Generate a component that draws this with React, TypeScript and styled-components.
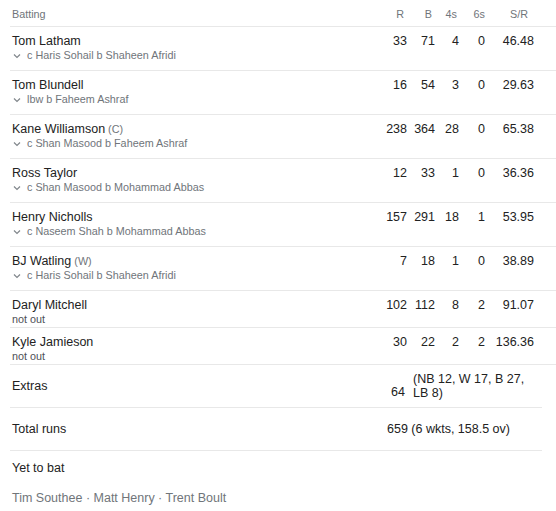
import React from "react";
import styled, {createGlobalStyle} from "styled-components";

const GlobalStyle = createGlobalStyle`
    html, body {
        margin: 0;
        padding: 0;
        background: #fff;
    }
    body {
        font-family: "Liberation Sans", Arial, sans-serif;
        color: #222;
    }
`;

type Batter = {
  name: string;
  role?: string;
  out: string;
  notOut?: boolean;
  stats: string[];
};

const batters: Batter[] = [
  {name: "Tom Latham", out: "c Haris Sohail b Shaheen Afridi", stats: ["33", "71", "4", "0", "46.48"]},
  {name: "Tom Blundell", out: "lbw b Faheem Ashraf", stats: ["16", "54", "3", "0", "29.63"]},
  {name: "Kane Williamson", role: "(C)", out: "c Shan Masood b Faheem Ashraf", stats: ["238", "364", "28", "0", "65.38"]},
  {name: "Ross Taylor", out: "c Shan Masood b Mohammad Abbas", stats: ["12", "33", "1", "0", "36.36"]},
  {name: "Henry Nicholls", out: "c Naseem Shah b Mohammad Abbas", stats: ["157", "291", "18", "1", "53.95"]},
  {name: "BJ Watling", role: "(W)", out: "c Haris Sohail b Shaheen Afridi", stats: ["7", "18", "1", "0", "38.89"]},
  {name: "Daryl Mitchell", out: "not out", notOut: true, stats: ["102", "112", "8", "2", "91.07"]},
  {name: "Kyle Jamieson", out: "not out", notOut: true, stats: ["30", "22", "2", "2", "136.36"]},
];

// header label offsets from the right edge of each stat column
const columns = [
  {label: "R", inset: 3},
  {label: "B", inset: 3},
  {label: "4s", inset: 2},
  {label: "6s", inset: 0},
  {label: "S/R", inset: 6},
];

const Page = styled.div`
    width: 556px;
    box-sizing: border-box;
    padding-left: 10px;
`;

const BattingTable = styled.div`
    width: 100%;
`;

const StatGrid = styled.div`
    display: grid;
    grid-template-columns: 1fr 28px 28px 24px 26px 49px;
    padding-right: 22px;
    border-bottom: 1px solid #e8e8e8;
`;

const HeaderRow = styled(StatGrid)`
    height: 27px;
    align-items: center;
    padding-top: 2px;
    box-sizing: border-box;
    font-size: 10.8px;
    color: #70757a;
`;

const HeaderLabel = styled.div`
    padding-left: 2px;
`;

const HeaderStat = styled.div<{ inset: number }>`
    text-align: right;
    padding-right: ${p => p.inset}px;
    white-space: nowrap;
`;

const BatterRow = styled(StatGrid)<{ notOut?: boolean }>`
    padding-top: 7px;
    padding-bottom: ${p => p.notOut ? 2 : 9}px;
    align-items: start;
`;

const NameCell = styled.div`
    padding-left: 2px;
    display: flex;
    flex-direction: column;
`;

const Name = styled.div`
    font-size: 12.5px;
    line-height: 15px;
    color: #222;
`;

const Role = styled.span`
    font-size: 10.8px;
    color: #70757a;
    margin-left: 3px;
`;

const Dismissal = styled.div<{ notOut?: boolean }>`
    display: flex;
    align-items: center;
    font-size: 10.8px;
    line-height: 12px;
    color: ${p => p.notOut ? "#4d5156" : "#70757a"};
    padding-left: ${p => p.notOut ? 0 : 1}px;

    svg {
        width: 8px;
        height: 6px;
        margin-right: 6px;
        margin-top: 1px;
    }
`;

const StatCell = styled.div`
    font-size: 12.5px;
    line-height: 15px;
    text-align: right;
    white-space: nowrap;
`;

const SummaryTable = styled.div`
    margin-right: 14px;
`;

const SummaryRow = styled.div`
    display: grid;
    grid-template-columns: 1fr 18px 128px;
    column-gap: 8px;
    padding-right: 1px;
    height: 42px;
    align-items: center;
    border-bottom: 1px solid #e8e8e8;
    font-size: 12.5px;
    line-height: 15px;
`;

const SummaryLabel = styled.div`
    padding-left: 2px;
`;

const ExtrasValue = styled.div`
    text-align: right;
    padding-top: 13px;
    white-space: nowrap;
`;

const ExtrasDetail = styled.div`
    line-height: 14px;
`;

const TotalValue = styled.div`
    grid-column: 2 / span 2;
    white-space: nowrap;
`;

const YetToBat = styled.div`
    padding: 10px 0 0 2px;
    font-size: 12.5px;
    line-height: 15px;
`;

const YetTitle = styled.div`
    color: #222;
`;

const YetNames = styled.div`
    margin-top: 15px;
    color: #70757a;
`;

const Chevron = () => (
  <svg viewBox="0 0 8 6" fill="none">
    <path d="M1 1.5l3 3 3-3" stroke="#80868b" strokeWidth="1.2"/>
  </svg>
);

const App = () => {
  return (
    <Page>
      <GlobalStyle/>
      <BattingTable>
        <HeaderRow>
          <HeaderLabel>Batting</HeaderLabel>
          {
            columns.map(c => (
              <HeaderStat key={c.label} inset={c.inset}>{c.label}</HeaderStat>
            ))
          }
        </HeaderRow>
        {
          batters.map(b => (
            <BatterRow key={b.name} notOut={b.notOut}>
              <NameCell>
                <Name>
                  {b.name}
                  {b.role && <Role>{b.role}</Role>}
                </Name>
                <Dismissal notOut={b.notOut}>
                  {!b.notOut && <Chevron/>}
                  {b.out}
                </Dismissal>
              </NameCell>
              {
                b.stats.map((s, i) => (
                  <StatCell key={i}>{s}</StatCell>
                ))
              }
            </BatterRow>
          ))
        }
      </BattingTable>
      <SummaryTable>
        <SummaryRow>
          <SummaryLabel>Extras</SummaryLabel>
          <ExtrasValue>64</ExtrasValue>
          <ExtrasDetail>(NB 12, W 17, B 27, LB 8)</ExtrasDetail>
        </SummaryRow>
        <SummaryRow>
          <SummaryLabel>Total runs</SummaryLabel>
          <TotalValue>659 (6 wkts, 158.5 ov)</TotalValue>
        </SummaryRow>
      </SummaryTable>
      <YetToBat>
        <YetTitle>Yet to bat</YetTitle>
        <YetNames>Tim Southee · Matt Henry · Trent Boult</YetNames>
      </YetToBat>
    </Page>
  );
};

export default App;
